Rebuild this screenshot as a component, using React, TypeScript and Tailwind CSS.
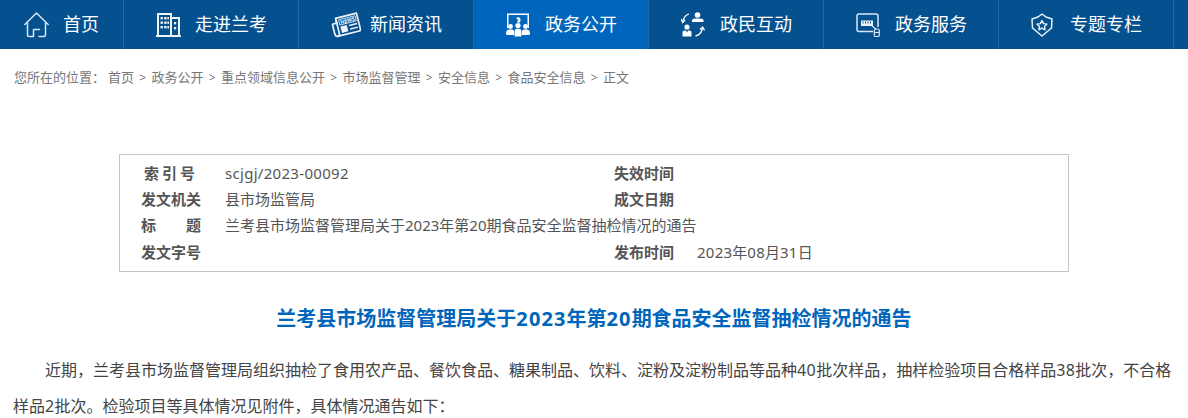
const fontStack = { fontFamily: '"Noto Sans", "Noto Sans CJK SC", sans-serif' };

function HomeIcon() {
  return (
    <svg width="25" height="26" viewBox="0 0 25 26" fill="none" stroke="#dbe6f2" strokeWidth="1.5" strokeLinejoin="round" strokeLinecap="round">
      <path d="M0.8 12.5 L12.5 1 L24.2 12.5" />
      <path d="M3.5 11 V23 Q3.5 24.5 5 24.5 H9.5 V17.5 H15.5" />
      <path d="M21.5 11 V23 Q21.5 24.5 20 24.5 H15" />
    </svg>
  );
}

function BuildingIcon() {
  return (
    <svg width="25" height="24" viewBox="0 0 25 24" fill="#eef3f8">
      <path fillRule="evenodd" d="M1 0 H16 V4 H24 V22 H25 V24 H0 V22 H1 Z M3 2 V22 H14 V2 Z M16 6 V22 H22 V6 Z" />
      <rect x="4.5" y="4" width="2.4" height="2.4" />
      <rect x="8.2" y="4" width="2.4" height="2.4" />
      <rect x="11.4" y="4" width="1.6" height="2.4" />
      <rect x="4.5" y="8.5" width="2.4" height="2.4" />
      <rect x="8.2" y="8.5" width="2.4" height="2.4" />
      <rect x="11.4" y="8.5" width="1.6" height="2.4" />
      <rect x="4.5" y="13" width="2.4" height="2.4" />
      <rect x="8.2" y="13" width="2.4" height="2.4" />
      <rect x="11.4" y="13" width="1.6" height="2.4" />
      <rect x="18" y="9" width="2.2" height="2.4" />
      <rect x="18" y="14" width="2.2" height="2.4" />
    </svg>
  );
}

function NewsIcon() {
  return (
    <svg width="30" height="26" viewBox="0 0 30 26">
      <g transform="rotate(-14 15 13)" stroke="#eef3f8" fill="none" strokeLinejoin="round">
        <path d="M6.5 4 H28 V20.5 Q28 22 26.5 22 H5 Q2 22 2 19 V9 H6.5 Z" strokeWidth="1.7" />
        <path d="M6.5 4 V19 Q6.5 22 4.5 22" strokeWidth="1.7" />
        <rect x="9" y="6.2" width="17" height="5.3" strokeWidth="0.8" />
        <text x="17.5" y="10.7" fontSize="5" fontWeight="700" textAnchor="middle" fill="#ffffff" stroke="none">NEWS</text>
        <rect x="9.2" y="13.2" width="6.5" height="6.5" fill="#eef3f8" stroke="none" />
        <rect x="18" y="13.5" width="8" height="1.5" fill="#eef3f8" stroke="none" />
        <rect x="18" y="17.2" width="8" height="1.5" fill="#eef3f8" stroke="none" />
      </g>
    </svg>
  );
}

function MeetingIcon() {
  return (
    <svg width="24" height="24" viewBox="0 0 24 24" fill="#ffffff">
      <path fillRule="evenodd" d="M1 0.5 H23 V15 H21.5 V2 H2.5 V15 H1 Z" />
      <path d="M12 4 Q15 4.5 14.5 7.5 Q14 9.5 12.5 10 L11 8.5 L12.5 7 L10 5.5 Z" />
      <circle cx="4.5" cy="13.5" r="2.4" />
      <circle cx="12" cy="12.5" r="2.6" />
      <circle cx="19.5" cy="13.5" r="2.4" />
      <path d="M0 21 Q0 16.5 3 16.5 H6 Q7.5 16.5 8 18 V22 H1.5 Q0 22 0 21 Z" />
      <path d="M8.5 19 Q8.5 15.8 11 15.8 H13 Q15.5 15.8 15.5 19 V23.5 H8.5 Z" />
      <path d="M16 18 Q16.5 16.5 18 16.5 H21 Q24 16.5 24 21 Q24 22 22.5 22 H16 Z" />
    </svg>
  );
}

function InteractIcon() {
  return (
    <svg width="24" height="25" viewBox="0 0 24 25" fill="#ffffff">
      <circle cx="16.5" cy="3" r="2.8" />
      <path d="M11 10 V8.5 Q11 6.5 13.5 6.5 H19.5 Q22.5 6.5 22.5 8.5 V10 Z" />
      <circle cx="6" cy="15" r="2.6" />
      <path d="M1.5 24.5 V20.5 Q1.5 18.5 3.5 18.5 H5 L6 20.5 L7 18.5 H8.5 Q10.5 18.5 10.5 20.5 V24.5 Z" />
      <path d="M8 2 Q3 3.5 1.8 9.5" fill="none" stroke="#ffffff" strokeWidth="1.3" />
      <path d="M0 7 L1.7 10.5 L4.2 7.8" fill="none" stroke="#ffffff" strokeWidth="1.3" />
      <path d="M14.5 24 Q20 23 21.5 16" fill="none" stroke="#ffffff" strokeWidth="1.3" />
      <path d="M19 17.5 L21.7 15 L23.5 18.5" fill="none" stroke="#ffffff" strokeWidth="1.3" />
    </svg>
  );
}

function ServiceIcon() {
  return (
    <svg width="24" height="24" viewBox="0 0 24 24">
      <path d="M17 18.5 H3 Q1 18.5 1 16.5 V3 Q1 1 3 1 H20 Q22 1 22 3 V14" fill="none" stroke="#dbe6f2" strokeWidth="1.5" />
      <rect x="5" y="7.5" width="12" height="5.5" fill="#eef3f8" />
      <path d="M7 8.5 V10.5 M9.5 8.5 V10.5 M12 8.5 V10.5 M14.5 8.5 V10.5" stroke="#05508f" strokeWidth="1" />
      <path d="M15.5 12.5 L20 16" stroke="#dbe6f2" strokeWidth="1.3" />
      <rect x="18.3" y="16" width="5" height="7.5" rx="1.6" fill="none" stroke="#dbe6f2" strokeWidth="1.2" />
      <path d="M18.5 19.5 H23" stroke="#dbe6f2" strokeWidth="1.2" />
    </svg>
  );
}

function BadgeIcon() {
  return (
    <svg width="22" height="24" viewBox="0 0 22 24" fill="none" stroke="#eef3f8" strokeWidth="1.5" strokeLinejoin="round">
      <path d="M7 4 L11 1 L15 4 L21 6 L20.5 15 L11 23 L1.5 15 L1 6 Z" />
      <path d="M11 7.5 L12.6 10.6 L16 11.1 L13.5 13.5 L14.1 16.8 L11 15.2 L7.9 16.8 L8.5 13.5 L6 11.1 L9.4 10.6 Z" strokeWidth="1.4" />
    </svg>
  );
}

const navItems = [
  { label: '首页', icon: <HomeIcon />, cls: 'w-[124px] pl-[24px] gap-[14px]' },
  { label: '走进兰考', icon: <BuildingIcon />, cls: 'w-[175px] pl-[32px]' },
  { label: '新闻资讯', icon: <NewsIcon />, cls: 'w-[175px] pl-[32px]' },
  { label: '政务公开', icon: <MeetingIcon />, cls: 'w-[175px] pl-[32px]', active: true },
  { label: '政民互动', icon: <InteractIcon />, cls: 'w-[175px] pl-[32px]' },
  { label: '政务服务', icon: <ServiceIcon />, cls: 'w-[175px] pl-[32px]' },
  { label: '专题专栏', icon: <BadgeIcon />, cls: 'w-[175px] pl-[32px]' },
];

const crumbs = ['首页', '政务公开', '重点领域信息公开', '市场监督管理', '安全信息', '食品安全信息', '正文'];

function InfoRow({ label, value, label2, value2 }: { label: React.ReactNode; value?: React.ReactNode; label2?: string; value2?: React.ReactNode }) {
  return (
    <div className="flex h-[26.25px] items-center text-[15px] text-[#555555]">
      <div className="w-[60px] shrink-0 font-bold">{label}</div>
      <div className="ml-[24px] w-[389px] shrink-0 whitespace-nowrap">{value}</div>
      {label2 && <div className="w-[60px] shrink-0 font-bold">{label2}</div>}
      {value2 && <div className="ml-[23px] whitespace-nowrap">{value2}</div>}
    </div>
  );
}

export default function App() {
  return (
    <div className="h-[418px] w-[1188px] overflow-hidden bg-white" style={fontStack}>
      {/* Top nav */}
      <nav className="flex h-[49px] bg-[#05508f]">
        {navItems.map((item) => (
          <a
            key={item.label}
            className={`flex h-full shrink-0 items-center border-r border-[#1f68ab] text-[18px] text-white ${item.cls} ${item.active ? 'bg-[#0066bd]' : ''}`}
          >
            <span className={item.label === '首页' ? '' : 'flex w-[39px] shrink-0'}>{item.icon}</span>
            <span className="whitespace-nowrap">{item.label}</span>
          </a>
        ))}
      </nav>

      {/* Breadcrumb */}
      <div className="mt-[20px] flex h-[18px] items-center pl-[14px] text-[13px] whitespace-nowrap text-[#777777]">
        <span className="w-[94px]">您所在的位置：</span>
        {crumbs.map((c, i) => (
          <span key={c} className="flex items-center">
            {i > 0 && <span className="mx-[5.3px] text-[12px]">&gt;</span>}
            {c}
          </span>
        ))}
      </div>

      {/* Info table */}
      <div className="mx-[119px] mt-[67px] h-[118px] w-[950px] border border-[#c4c4c4] pt-[5px] pl-[21px]">
        <InfoRow
          label={<span className="block text-center tracking-[3px]">索引号</span>}
          value={<span className="tracking-[0.3px]">scjgj/2023-00092</span>}
          label2="失效时间"
        />
        <InfoRow label="发文机关" value="县市场监管局" label2="成文日期" />
        <InfoRow
          label={<span className="flex justify-between"><span>标</span><span>题</span></span>}
          value="兰考县市场监督管理局关于2023年第20期食品安全监督抽检情况的通告"
        />
        <InfoRow
          label="发文字号"
          label2="发布时间"
          value2={<><span className="tracking-[0.25px]">2023</span>年<span className="tracking-[0.25px]">08</span>月<span className="tracking-[0.25px]">31</span>日</>}
        />
      </div>

      {/* Article */}
      <h1 className="mt-[32px] text-center text-[20px] leading-[30px] font-bold text-[#0066bb]">
        兰考县市场监督管理局关于<span className="tracking-[1.1px]">2023</span>年第<span className="tracking-[1.1px]">20</span>期食品安全监督抽检情况的通告
      </h1>
      <p className="mx-[13px] mt-[18px] indent-[32px] text-[16px] leading-[36px] text-[#444444]">
        近期，兰考县市场监督管理局组织抽检了食用农产品、餐饮食品、糖果制品、饮料、淀粉及淀粉制品等品种<span className="tracking-[0.4px]">40</span>批次样品，抽样检验项目合格样品<span className="tracking-[0.4px]">38</span>批次，不合格样品<span className="tracking-[0.4px]">2</span>批次。检验项目等具体情况见附件，具体情况通告如下：
      </p>
    </div>
  );
}
